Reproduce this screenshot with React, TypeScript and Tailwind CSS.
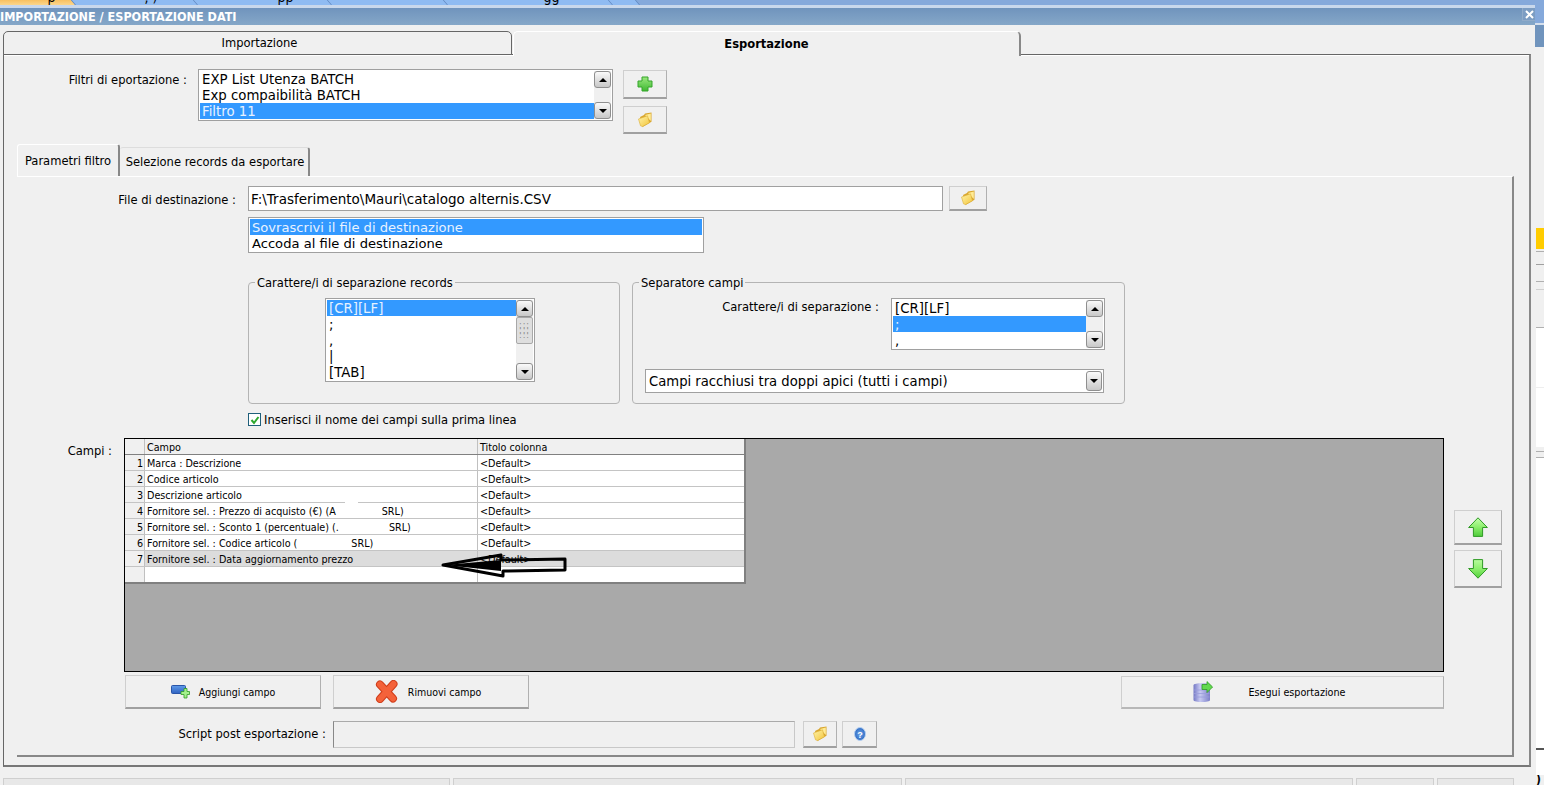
import type { ReactNode } from "react";

const FOLDER = (
  <svg width="16" height="16" viewBox="0 0 16 16">
    <defs>
      <linearGradient id="fold" x1="0" y1="0" x2="1" y2="1">
        <stop offset="0" stopColor="#fff3a8" />
        <stop offset="1" stopColor="#f2c53d" />
      </linearGradient>
    </defs>
    <path d="M3 5 L7 3 L8 1.5 L14.5 0.5 L14.5 9.8 L5.5 15 Z" fill="#d9a62e" />
    <path d="M8 3 L13.8 1.4 L13.8 9" fill="#ffeb95" />
    <path d="M1.5 7 L10.5 3.8 L12.5 10.8 L5.5 14.6 L3.5 13.8 Z" fill="url(#fold)" stroke="#dcae38" strokeWidth="0.6" />
  </svg>
);

function Btn({ className, children }: { className: string; children?: ReactNode }) {
  return (
    <div className={"flex items-center justify-center shrink-0 bg-[#f0f0f0] border border-[#cfcfcf] border-r-[#b0b0b0] border-b-2 border-b-[#a0a0a0] " + className}>
      {children}
    </div>
  );
}

function ScrollBtn({ down }: { down?: boolean }) {
  return (
    <div className="h-[17px] w-[17px] flex items-center justify-center rounded-[3px] border border-[#8f8f8f] bg-gradient-to-b from-[#fafafa] to-[#c8c8c8]">
      <div className={"w-0 h-0 border-l-[4px] border-r-[4px] border-transparent " + (down ? "border-t-[4px] border-t-black" : "border-b-[4px] border-b-black")} />
    </div>
  );
}

function ListBox({ rows, selected, className, thumb }: { rows: string[]; selected: number; className: string; thumb?: boolean }) {
  return (
    <div className={"flex shrink-0 bg-white border border-[#a0a0a0] p-px overflow-hidden list-font " + className}>
      <div className="flex-1 min-w-0 overflow-hidden">
        {rows.map((r, i) => (
          <div key={i} className={"h-[16px] leading-[18px] pl-[2px] text-[13.3px] whitespace-nowrap overflow-hidden " + (i === selected ? "bg-[#3399ff] text-[#e8f2ff]" : "text-black")}>
            {r}
          </div>
        ))}
      </div>
      <div className="w-[17px] shrink-0 flex flex-col justify-between bg-[#f0f0f0]">
        <div>
          <ScrollBtn />
          {thumb && (
            <div className="h-[27px] w-[17px] rounded-[2px] border border-[#a8a8a8] bg-[#dedede] flex items-center justify-center text-[8px] leading-[5px] text-[#8a8a8a] tracking-[1px] text-center">
              ::: ::: :::
            </div>
          )}
        </div>
        <ScrollBtn down />
      </div>
    </div>
  );
}

function Arrow({ down }: { down?: boolean }) {
  const id = down ? "ad" : "au";
  return (
    <svg width="20" height="20" viewBox="0 0 20 20" className={down ? "rotate-180" : ""}>
      <defs>
        <linearGradient id={id} x1="0" y1="0" x2="0" y2="1">
          <stop offset="0" stopColor={down ? "#52d03c" : "#c4ffac"} />
          <stop offset="0.5" stopColor="#8cee6c" />
          <stop offset="1" stopColor={down ? "#b8fb9e" : "#4fcb3a"} />
        </linearGradient>
      </defs>
      <path d="M10 0.8 L19.4 10.5 L14.6 10.5 L14.6 19.4 L5.4 19.4 L5.4 10.5 L0.6 10.5 Z" fill={`url(#${id})`} stroke="#2f9a25" strokeWidth="1" />
    </svg>
  );
}

const ROWS: [string, string][] = [
  ["1", "Marca : Descrizione"],
  ["2", "Codice articolo"],
  ["3", "Descrizione articolo"],
  ["4", "Fornitore sel. : Prezzo di acquisto (€) (A"],
  ["5", "Fornitore sel. : Sconto 1 (percentuale) (."],
  ["6", "Fornitore sel. : Codice articolo ("],
  ["7", "Fornitore sel. : Data aggiornamento prezzo"],
];

// pezzi dopo la parte cancellata nello screenshot
const TAILS: Record<string, [string, string]> = {
  "4": ["SRL)", "ml-[46px]"],
  "5": ["SRL)", "ml-[50px]"],
  "6": ["SRL)", "ml-[54px]"],
};

function Grid() {
  return (
    <div className="relative w-[1320px] h-[234px] shrink-0 bg-[#a9a9a9] border border-black">
      <div className="w-[621px] bg-white border-b-2 border-r-2 border-[#808080] grid-font text-[10.7px] text-black">
        <div className="flex h-[16px] leading-[18px] bg-[#f0f0f0] border-b border-[#808080]">
          <div className="w-[20px] border-r border-[#c0c0c0]" />
          <div className="w-[333px] pl-[2px] border-r border-[#c0c0c0]">Campo</div>
          <div className="flex-1 pl-[2px]">Titolo colonna</div>
        </div>
        {ROWS.map(([n, t]) => (
          <div key={n} className={"flex h-[16px] leading-[17px] border-b border-[#c4c4c4] " + (n === "7" ? "bg-[#dcdcdc]" : "")}>
            <div className="w-[20px] text-right pr-px bg-[#f0f0f0] border-r border-[#c0c0c0]">{n}</div>
            <div className="w-[333px] pl-[2px] border-r border-[#c0c0c0] whitespace-nowrap overflow-hidden">
              {t}
              {TAILS[n] && <span className={TAILS[n][1]}>{TAILS[n][0]}</span>}
            </div>
            <div className="flex-1 pl-[2px]">&lt;Default&gt;</div>
          </div>
        ))}
        <div className="flex h-[15px]">
          <div className="w-[20px] bg-[#f0f0f0] border-r border-[#c0c0c0]" />
          <div className="w-[333px] border-r border-[#c0c0c0]" />
        </div>
      </div>
      {/* freccia disegnata a mano sopra la griglia */}
      <svg className="absolute left-[316px] top-[113px]" width="130" height="28" viewBox="0 0 130 28">
        <path d="M2 13 L60 3 L60 8 L124 7 L124 18 L62 19 L62 24 Z" fill="none" stroke="black" strokeWidth="3" strokeLinejoin="round" />
        <path d="M4 13 L60 8 L60 19 Z" fill="black" />
      </svg>
      <div className="absolute left-[220px] top-[62px] w-[13px] h-[3px] bg-white" />
    </div>
  );
}

function Group({ title, className, children }: { title: string; className: string; children: ReactNode }) {
  return (
    <div className={"relative shrink-0 h-[122px] rounded-[4px] border border-[#b4b4b4] " + className}>
      <span className="absolute left-[6px] -top-[7px] px-[2px] bg-[#f0f0f0] text-[12.8px] leading-[14px] ui-font">{title}</span>
      {children}
    </div>
  );
}

const STRIP: [string, string][] = [
  ["h-[181px]", "bg-[#f0f0f0]"],
  ["h-[21px]", "bg-[#ffcc00]"],
  ["h-[3px]", "bg-[#f0f0f0] border-b border-[#b0b0b0]"],
  ["h-[13px]", "bg-[#f0f0f0] border-b border-[#a0a0a0]"],
  ["h-[17px]", "bg-[#f0f0f0] border-b border-[#b0b0b0]"],
  ["h-[8px]", "bg-[#f0f0f0] border-b border-[#d0d0d0]"],
  ["h-[38px]", "bg-[#f0f0f0] border-b border-[#b0b0b0]"],
  ["h-[60px]", "bg-white border-b border-[#eeeeee]"],
  ["h-[59px]", "bg-white"],
  ["h-[5px]", "bg-[#f0f0f0] border-b border-[#b0b0b0]"],
  ["h-[6px]", "bg-[#f0f0f0] border-b border-[#b0b0b0]"],
  ["h-[290px]", "bg-white"],
  ["h-[2px]", "bg-[#555555]"],
  ["h-[25px]", "bg-white"],
];

const TOPTABS: [string, string, string][] = [
  ["w-[78px] -ml-[4px] pl-[56px]", "bg-gradient-to-b from-[#f8c060] to-[#fbd68c]", "p"],
  ["w-[122px] pl-[75px]", "bg-[#8fbbf2]", ", )"],
  ["w-[134px] pl-[86px]", "bg-[#8fbbf2]", "pp"],
  ["w-[116px]", "bg-[#8fbbf2]", ""],
  ["w-[165px] pl-[102px]", "bg-[#8fbbf2]", "gg"],
  ["w-[27px]", "bg-[#8fbbf2]", ""],
];

export default function App() {
  return (
    <div className="w-[1544px] h-[785px] flex overflow-hidden bg-[#f0f0f0] text-black ui-font">
      <style>{`
        .ui-font { font-family: "DejaVu Sans Condensed", "Noto Sans", "Liberation Sans", sans-serif; }
        .list-font { font-family: "DejaVu Sans", "Liberation Sans", sans-serif; }
        .grid-font { font-family: "DejaVu Sans Condensed", "Noto Sans", "Liberation Sans", sans-serif; }
      `}</style>
      <div className="w-[1535px] shrink-0 flex flex-col">
        {/* barra schede del programma, tagliata in alto */}
        <div className="h-[5px] flex bg-[#85a9db] overflow-hidden">
          {TOPTABS.map(([w, bg, txt], i) => (
            <div key={i} className={"h-[5px] shrink-0 overflow-hidden skew-x-[40deg] border-r border-[#5f86bd] " + w + " " + bg}>
              <div className="-skew-x-[40deg] text-[14px] leading-[14px] -mt-[10px] text-black whitespace-nowrap">{txt}</div>
            </div>
          ))}
        </div>
        <div className="h-[3px] bg-[#c9d8ec]" />
        <div className="h-[17px] flex items-center justify-between bg-gradient-to-b from-[#7094bd] to-[#85a7c8] text-white text-[12.5px] font-bold">
          <span className="leading-[17px]">IMPORTAZIONE / ESPORTAZIONE DATI</span>
          <div className="w-[13px] h-[13px] self-start flex items-center justify-center bg-[#7c9dc3] border-l border-b border-[#90abc9]">
            <svg width="9" height="9" viewBox="0 0 9 9">
              <path d="M1 1 L8 8 M8 1 L1 8" stroke="white" strokeWidth="2" />
            </svg>
          </div>
        </div>

        {/* tab esterne */}
        <div className="flex ml-[3px] mt-[6px] h-[24px] relative z-10">
          <div className="w-[509px] h-[24px] border border-[#666] rounded-t-[5px] pl-[4px] flex items-center justify-center text-[12.8px] bg-[#f0f0f0]">
            Importazione
          </div>
          <div className="ml-px w-[508px] h-[25px] border-t border-t-white border-r-2 border-r-[#888] rounded-tr-[5px] border-l border-l-white rounded-tl-[5px] flex items-center justify-center text-[12.8px] font-bold bg-[#f0f0f0]">
            Esportazione
          </div>
        </div>

        <div className="ml-[3px] w-[1528px] h-[714px] -mt-px border border-[#666] border-r-2 border-r-[#888] border-b-2 border-b-[#777]">
          <div className="h-px bg-white" />
          {/* riga filtri */}
          <div className="flex mt-[13px] h-[65px]">
            <div className="w-[183px] text-right text-[12.8px] leading-[22px]">Filtri di eportazione :</div>
            <ListBox className="ml-[11px] w-[415px] h-[52px]" selected={2} rows={["EXP List Utenza BATCH", "Exp compaibilità BATCH", "Filtro 11"]} />
            <div className="ml-[10px] flex flex-col">
              <Btn className="w-[44px] h-[29px] mt-px">
                <svg width="16" height="16" viewBox="0 0 16 16">
                  <defs>
                    <linearGradient id="plus" x1="0" y1="0" x2="0" y2="1">
                      <stop offset="0" stopColor="#9be87e" />
                      <stop offset="1" stopColor="#3fb832" />
                    </linearGradient>
                  </defs>
                  <path d="M5 1 H11 V5 H15 V11 H11 V15 H5 V11 H1 V5 H5 Z" fill="url(#plus)" stroke="#35a52a" strokeWidth="1" />
                </svg>
              </Btn>
              <Btn className="w-[44px] h-[28px] mt-[7px]">{FOLDER}</Btn>
            </div>
          </div>

          {/* tab interne */}
          <div className="flex items-end ml-[13px] mt-[10px] h-[32px] text-[12.8px]">
            <div className="w-[103px] h-[32px] border-t border-l border-white border-r-2 border-r-[#888] rounded-t-[3px] flex items-center justify-center">
              Parametri filtro
            </div>
            <div className="w-[190px] h-[29px] border-t border-[#ddd] border-r-2 border-r-[#888] rounded-t-[3px] pl-[2px] flex items-center justify-center">
              Selezione records da esportare
            </div>
          </div>

          <div className="ml-[13px] w-[1497px] h-[581px] border-t border-t-white border-r-2 border-r-[#888] border-b-2 border-b-[#888]">
            <div className="flex mt-[9px] h-[25px] items-center">
              <div className="w-[219px] text-right text-[12.8px] mt-[2px]">File di destinazione :</div>
              <div className="ml-[12px] w-[695px] h-[25px] bg-white border border-[#a0a0a0] pl-[2px] text-[13.5px] leading-[24px] list-font">
                F:\Trasferimento\Mauri\catalogo alternis.CSV
              </div>
              <Btn className="ml-[6px] w-[38px] h-[25px]">{FOLDER}</Btn>
            </div>

            <div className="ml-[231px] mt-[6px] w-[456px] h-[36px] bg-white border border-[#a0a0a0] p-px list-font text-[13.1px] leading-[18px]">
              <div className="h-[16px] bg-[#3399ff] text-[#e8f2ff] pl-[2px] overflow-hidden">Sovrascrivi il file di destinazione</div>
              <div className="h-[16px] pl-[2px] overflow-hidden">Accoda al file di destinazione</div>
            </div>

            <div className="flex ml-[231px] mt-[29px]">
              <Group title="Carattere/i di separazione records" className="w-[372px]">
                <ListBox className="ml-[76px] mt-[15px] w-[210px] h-[84px]" selected={0} thumb rows={["[CR][LF]", ";", ",", "|", "[TAB]"]} />
              </Group>
              <Group title="Separatore campi" className="ml-[12px] w-[493px]">
                <div className="flex mt-[15px]">
                  <div className="w-[246px] text-right text-[12.8px] leading-[17px]">Carattere/i di separazione :</div>
                  <ListBox className="ml-[12px] w-[214px] h-[52px]" selected={1} rows={["[CR][LF]", ";", ","]} />
                </div>
                <div className="ml-[12px] mt-[19px] w-[459px] h-[24px] bg-white border border-[#a0a0a0] flex items-center justify-between pl-[3px] pr-px text-[13.2px] list-font">
                  <span className="pt-px">Campi racchiusi tra doppi apici (tutti i campi)</span>
                  <div className="w-[16px] h-[20px] flex items-center justify-center rounded-[3px] border border-[#8f8f8f] bg-gradient-to-b from-[#fafafa] to-[#c8c8c8]">
                    <div className="w-0 h-0 border-l-[4px] border-r-[4px] border-t-[4px] border-transparent border-t-black" />
                  </div>
                </div>
              </Group>
            </div>

            <div className="flex items-center ml-[231px] mt-[9px] h-[13px]">
              <div className="w-[13px] h-[13px] bg-white border border-[#1f5f7a] flex items-center justify-center">
                <svg width="10" height="10" viewBox="0 0 10 10">
                  <path d="M1.5 5 L4 8 L8.5 2" fill="none" stroke="#2ea82e" strokeWidth="2" />
                </svg>
              </div>
              <span className="ml-[3px] text-[12.8px]">Inserisci il nome dei campi sulla prima linea</span>
            </div>

            <div className="flex mt-[12px]">
              <div className="w-[95px] text-right text-[12.8px] mt-[3px]">Campi :</div>
              <div className="ml-[12px]">
                <Grid />
              </div>
              <div className="ml-[10px] flex flex-col">
                <Btn className="w-[48px] h-[35px] mt-[72px]">
                  <Arrow />
                </Btn>
                <Btn className="w-[48px] h-[38px] mt-[5px]">
                  <Arrow down />
                </Btn>
              </div>
            </div>

            <div className="flex mt-[3px] ml-[108px] text-[10.5px] grid-font">
              <Btn className="w-[196px] h-[34px]">
                <svg width="19" height="14" viewBox="0 0 19 14">
                  <defs>
                    <linearGradient id="win" x1="0" y1="0" x2="0" y2="1">
                      <stop offset="0" stopColor="#5f9bea" />
                      <stop offset="1" stopColor="#2f62c0" />
                    </linearGradient>
                  </defs>
                  <rect x="0.5" y="0.5" width="14" height="8" rx="1" fill="url(#win)" stroke="#2a55a8" />
                  <path d="M10 6.5 H13 V3.5 H16 V6.5 H18.5 V9.5 H16 V13 H13 V9.5 H10 Z" fill="#a4f08c" stroke="#2f9a25" strokeWidth="0.8" />
                </svg>
                <span className="ml-[9px] pt-[2px]">Aggiungi campo</span>
              </Btn>
              <Btn className="ml-[12px] w-[196px] h-[34px] pr-[6px]">
                <svg width="23" height="23" viewBox="0 0 23 23">
                  <path d="M5 4.5 L18 18.5 M18.5 4 L5 19" fill="none" stroke="#cf3d1a" strokeWidth="8" strokeLinecap="round" />
                  <path d="M5 4.5 L18 18.5 M18.5 4 L5 19" fill="none" stroke="#f4623a" strokeWidth="6" strokeLinecap="round" />
                </svg>
                <span className="ml-[10px] pt-[2px]">Rimuovi campo</span>
              </Btn>
              <Btn className="ml-[592px] mt-px w-[323px] h-[33px] border-b border-b-[#b8b8b8] pr-[26px] text-[10.7px]">
                <svg width="20" height="22" viewBox="0 0 20 22">
                  <defs>
                    <linearGradient id="dbg" x1="0" y1="0" x2="1" y2="0">
                      <stop offset="0" stopColor="#7478c4" />
                      <stop offset="0.4" stopColor="#c8caf2" />
                      <stop offset="1" stopColor="#7c80c8" />
                    </linearGradient>
                  </defs>
                  <path d="M0.5 4 C0.5 1.5 17 1.5 17 4 L17 19 C17 21.8 0.5 21.8 0.5 19 Z" fill="url(#dbg)" />
                  <path d="M1 9 H16.5 M1 12.5 H16.5 M1 16 H16.5" stroke="#9a9ddc" strokeWidth="0.8" />
                  <path d="M9 3.5 H14 V0.6 L19.6 6 L14 11.6 V8.5 H9 Z" fill="#62d94e" stroke="#2f9a25" strokeWidth="0.8" />
                </svg>
                <span className="ml-[35px] pt-[2px]">Esegui esportazione</span>
              </Btn>
            </div>

            <div className="flex items-center mt-[12px] h-[27px]">
              <div className="w-[309px] text-right text-[12.8px] -mt-px">Script post esportazione :</div>
              <div className="ml-[7px] w-[462px] h-[27px] border border-[#c8c8c8] border-l-[#888] border-t-[#aaa]" />
              <Btn className="ml-[8px] w-[34px] h-[27px]">{FOLDER}</Btn>
              <Btn className="ml-[5px] w-[35px] h-[27px]">
                <svg width="16" height="16" viewBox="0 0 16 16">
                  <defs>
                    <radialGradient id="hlp">
                      <stop offset="0" stopColor="#6fa4e8" />
                      <stop offset="1" stopColor="#2f6cc4" />
                    </radialGradient>
                  </defs>
                  <ellipse cx="8" cy="8" rx="5.5" ry="6.5" fill="url(#hlp)" stroke="#b4cff0" />
                  <text x="8" y="11.5" fontSize="9" fontWeight="700" textAnchor="middle" fill="white" fontFamily="Liberation Sans">?</text>
                </svg>
              </Btn>
            </div>
          </div>
        </div>

        {/* barra di stato */}
        <div className="flex gap-[3px] ml-[3px] mt-[11px] h-[7px]">
          <div className="w-[447px] bg-[#e8e8e8] border-t border-x border-[#cfcfcf]" />
          <div className="w-[449px] bg-[#e8e8e8] border-t border-x border-[#cfcfcf]" />
          <div className="w-[448px] bg-[#e8e8e8] border-t border-x border-[#cfcfcf]" />
          <div className="w-[78px] bg-[#e8e8e8] border-t border-x border-[#cfcfcf]" />
          <div className="w-[77px] bg-[#e8e8e8] border-t border-x border-[#cfcfcf]" />
        </div>
      </div>

      {/* finestra retrostante, a destra */}
      <div className="flex-1 flex flex-col">
        <div className="h-[23px] shrink-0 bg-[#85a9db]" />
        <div className="h-[2px] shrink-0 bg-[#d5dfec]" />
        <div className="h-[22px] shrink-0 bg-[#7094bd]" />
        <div className="pl-px flex flex-col">
          {STRIP.map(([h, c], i) => (
            <div key={i} className={"shrink-0 " + h + " " + c} />
          ))}
          <div className="h-[10px] shrink-0 overflow-hidden text-[12px] leading-[10px] font-bold">)</div>
        </div>
      </div>
    </div>
  );
}
